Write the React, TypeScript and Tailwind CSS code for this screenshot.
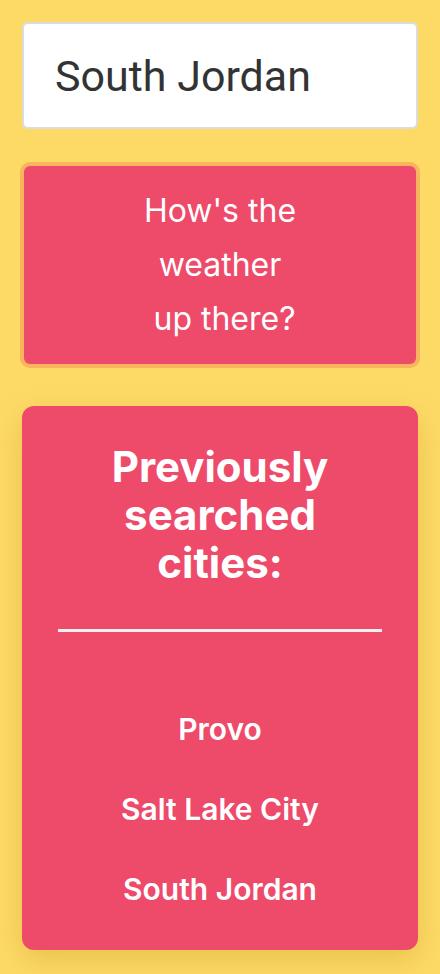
const cities = ["Provo", "Salt Lake City", "South Jordan"];

export default function App() {
  return (
    <div className="min-h-screen bg-[#fdda66] px-[22px] pt-[22px] pb-[27px] font-['Inter',sans-serif]">
      <input
        type="text"
        defaultValue="South Jordan"
        className="block w-full h-[107px] rounded-md border-2 border-[#dcdcdc] bg-white pl-[31px] text-[43px] text-[#333] outline-none font-['Roboto',sans-serif]"
      />

      <button className="mt-[37px] mx-[2px] block w-[calc(100%-4px)] rounded-md bg-[#ee4a6a] py-[18px] text-[32px] leading-[54px] text-white ring-4 ring-[#f9b45e]">
        How's the
        <br />
        weather
        <br />
        &nbsp;up there?
      </button>

      <div className="mt-[42px] rounded-xl bg-[#ee4a6a] px-[36px] pt-[37px] pb-[41px] text-center text-white shadow-[0_10px_30px_rgba(180,120,0,0.25)]">
        <h2 className="text-[42px] font-bold leading-[48px]">
          Previously
          <br />
          searched
          <br />
          cities:
        </h2>
        <div className="mt-[42px] h-[3px] bg-[#f0f0f0]" />
        <ul className="mt-[77px] flex flex-col gap-[40px]">
          {cities.map((c) => (
            <li key={c} className="text-[30px] font-semibold leading-[40px]">
              {c}
            </li>
          ))}
        </ul>
      </div>
    </div>
  );
}
